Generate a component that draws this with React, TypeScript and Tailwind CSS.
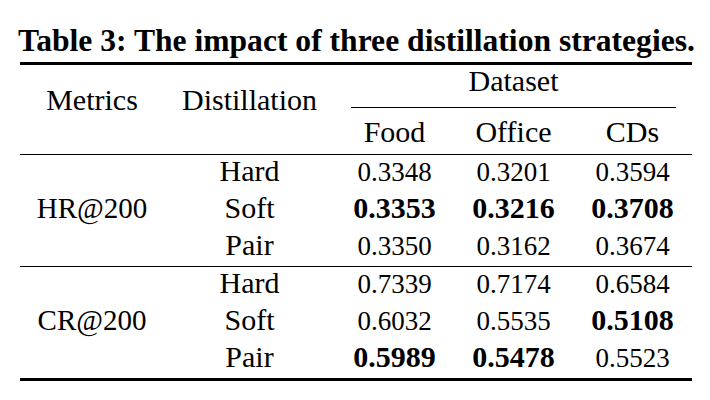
import React from "react";

type Cell = { v: string; b?: boolean };

const block1: Cell[][] = [
  [{ v: "0.3348" }, { v: "0.3201" }, { v: "0.3594" }],
  [{ v: "0.3353", b: true }, { v: "0.3216", b: true }, { v: "0.3708", b: true }],
  [{ v: "0.3350" }, { v: "0.3162" }, { v: "0.3674" }],
];
const block2: Cell[][] = [
  [{ v: "0.7339" }, { v: "0.7174" }, { v: "0.6584" }],
  [{ v: "0.6032" }, { v: "0.5535" }, { v: "0.5108", b: true }],
  [{ v: "0.5989", b: true }, { v: "0.5478", b: true }, { v: "0.5523" }],
];
const strategies = ["Hard", "Soft", "Pair"];

function Block({ metric, data }: { metric: string; data: Cell[][] }) {
  return (
    <div className="flex flex-col">
      {data.map((row, i) => (
        <div key={i} className="flex items-baseline h-[37px]">
          <div className="w-[144px] text-center text-[29px] leading-[32px]">
            {i === 1 ? metric : "\u00a0"}
          </div>
          <div className="w-[171px] text-center text-[30px] leading-[32px]">{strategies[i]}</div>
          {row.map((c, j) => (
            <div
              key={j}
              className={
                c.b
                  ? "w-[119px] text-center text-[30px] leading-[32px] font-bold"
                  : "w-[119px] text-center text-[27px] leading-[32px]"
              }
            >
              {c.v}
            </div>
          ))}
        </div>
      ))}
    </div>
  );
}

export default function App() {
  return (
    <div className="w-[710px] h-[400px] bg-white text-black font-[family-name:'Liberation_Serif',serif]">
      <div className="pt-[20px] pl-[18px] text-[31.6px] leading-[42px] font-bold whitespace-nowrap">
        Table 3: The impact of three distillation strategies.
      </div>
      <div className="ml-[20px] w-[672px]">
        <div className="h-[3px] bg-black" />
        <div className="flex h-[89px]">
          <div className="w-[144px] pt-[19px] text-center text-[30px] leading-[32px]">Metrics</div>
          <div className="w-[171px] pt-[19px] text-center text-[30px] leading-[32px]">Distillation</div>
          <div className="w-[357px] flex flex-col">
            <div className="h-[42px] text-center text-[30px] leading-[32px]">Dataset</div>
            <div className="mx-[16px] h-px bg-black" />
            <div className="h-[46px] pt-[8px] flex text-[30px] leading-[32px]">
              <div className="w-[119px] text-center">Food</div>
              <div className="w-[119px] text-center">Office</div>
              <div className="w-[119px] text-center">CDs</div>
            </div>
          </div>
        </div>
        <div className="h-px bg-black" />
        <Block metric="HR@200" data={block1} />
        <div className="h-px bg-black" />
        <Block metric="CR@200" data={block2} />
        <div className="h-[3px] bg-black" />
      </div>
    </div>
  );
}
